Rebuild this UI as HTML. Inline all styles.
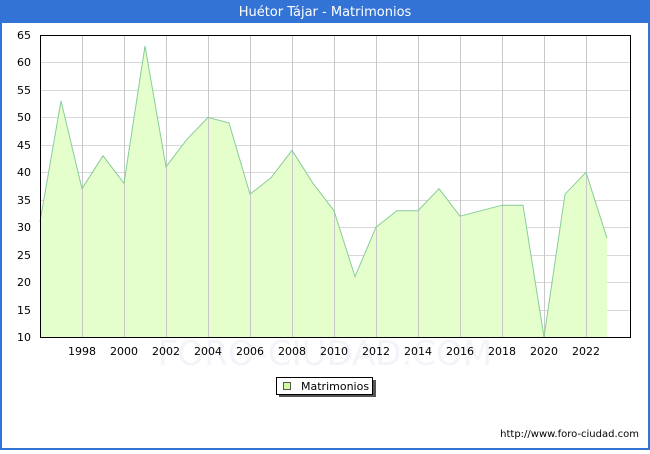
<!DOCTYPE html>
<html><head><meta charset="utf-8"><style>
body{margin:0;width:650px;height:450px;overflow:hidden;background:#fff;font-family:"DejaVu Sans","Liberation Sans",sans-serif}
</style></head><body>
<svg width="650" height="450" xmlns="http://www.w3.org/2000/svg" font-family="DejaVu Sans, Liberation Sans, sans-serif">
<rect x="0" y="0" width="650" height="450" fill="#3373d6"/>
<rect x="2" y="23" width="646" height="425" fill="#fff"/>
<text x="325" y="16" fill="#fff" font-size="13" text-anchor="middle">Huétor Tájar - Matrimonios</text>
<g stroke="#d8d8d8" stroke-width="1">
<line x1="40" x2="630" y1="310.5" y2="310.5"/><line x1="40" x2="630" y1="282.5" y2="282.5"/><line x1="40" x2="630" y1="255.5" y2="255.5"/><line x1="40" x2="630" y1="227.5" y2="227.5"/><line x1="40" x2="630" y1="200.5" y2="200.5"/><line x1="40" x2="630" y1="172.5" y2="172.5"/><line x1="40" x2="630" y1="145.5" y2="145.5"/><line x1="40" x2="630" y1="117.5" y2="117.5"/><line x1="40" x2="630" y1="90.5" y2="90.5"/><line x1="40" x2="630" y1="62.5" y2="62.5"/>
</g>
<polygon points="40,337 40,221.7 61,100.9 82,188.7 103,155.8 124,183.3 145,46 166,166.8 187,139.3 208,117.4 229,122.9 250,194.2 271,177.8 292,150.3 313,183.3 334,210.7 355,276.6 376,227.2 397,210.7 418,210.7 439,188.7 460,216.2 481,210.7 502,205.2 523,205.2 544,337 565,194.2 586,172.3 607,238.2 607,337" fill="#e4ffcc"/>
<g stroke="#c8c8c8" stroke-width="1">
<line x1="82.5" x2="82.5" y1="35" y2="337"/><line x1="124.5" x2="124.5" y1="35" y2="337"/><line x1="166.5" x2="166.5" y1="35" y2="337"/><line x1="208.5" x2="208.5" y1="35" y2="337"/><line x1="250.5" x2="250.5" y1="35" y2="337"/><line x1="292.5" x2="292.5" y1="35" y2="337"/><line x1="334.5" x2="334.5" y1="35" y2="337"/><line x1="376.5" x2="376.5" y1="35" y2="337"/><line x1="418.5" x2="418.5" y1="35" y2="337"/><line x1="460.5" x2="460.5" y1="35" y2="337"/><line x1="502.5" x2="502.5" y1="35" y2="337"/><line x1="544.5" x2="544.5" y1="35" y2="337"/><line x1="586.5" x2="586.5" y1="35" y2="337"/>
</g>
<polyline points="40,221.7 61,100.9 82,188.7 103,155.8 124,183.3 145,46 166,166.8 187,139.3 208,117.4 229,122.9 250,194.2 271,177.8 292,150.3 313,183.3 334,210.7 355,276.6 376,227.2 397,210.7 418,210.7 439,188.7 460,216.2 481,210.7 502,205.2 523,205.2 544,337 565,194.2 586,172.3 607,238.2" fill="none" stroke="#88cc99" stroke-width="1"/>
<rect x="40.5" y="35.5" width="590" height="302" fill="none" stroke="#000"/>
<text x="325" y="365" fill="#f2f4fa" font-size="34" text-anchor="middle">FORO-CIUDAD.COM</text>
<g font-size="11" fill="#000" text-anchor="end">
<text x="31" y="341">10</text><text x="31" y="314">15</text><text x="31" y="286">20</text><text x="31" y="259">25</text><text x="31" y="231">30</text><text x="31" y="204">35</text><text x="31" y="176">40</text><text x="31" y="149">45</text><text x="31" y="121">50</text><text x="31" y="94">55</text><text x="31" y="66">60</text><text x="31" y="39">65</text>
</g>
<g font-size="11" fill="#000" text-anchor="middle">
<text x="82" y="355">1998</text><text x="124" y="355">2000</text><text x="166" y="355">2002</text><text x="208" y="355">2004</text><text x="250" y="355">2006</text><text x="292" y="355">2008</text><text x="334" y="355">2010</text><text x="376" y="355">2012</text><text x="418" y="355">2014</text><text x="460" y="355">2016</text><text x="502" y="355">2018</text><text x="544" y="355">2020</text><text x="586" y="355">2022</text>
</g>
<rect x="279" y="380" width="97" height="17" fill="#555"/>
<rect x="276.5" y="377.5" width="96" height="17" fill="#fff" stroke="#000"/>
<rect x="283.5" y="382.5" width="7" height="7" fill="#ccff99" stroke="#555"/>
<text x="301" y="390" font-size="11" fill="#000">Matrimonios</text>
<text x="639" y="437" font-size="10" fill="#000" text-anchor="end">http://www.foro-ciudad.com</text>
</svg>
</body></html>
